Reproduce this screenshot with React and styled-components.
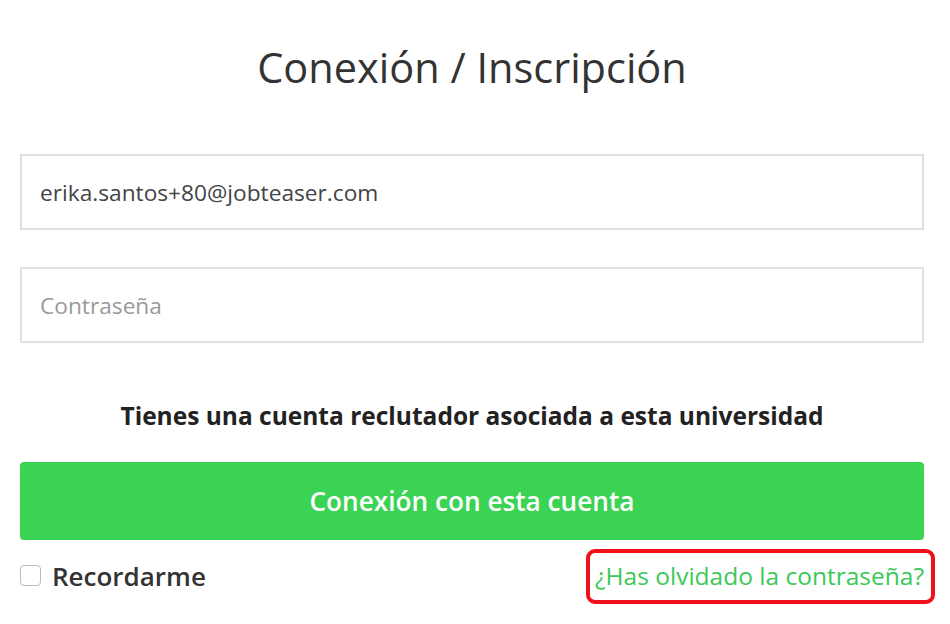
import React from 'react';
import styled, { createGlobalStyle } from 'styled-components';

const GlobalStyle = createGlobalStyle`
    body {
        margin: 0;
        background: #fff;
        font-family: "Open Sans", "Noto Sans", sans-serif;
    }
`

const Page = styled.div`
    width: 950px;
    height: 624px;
    box-sizing: border-box;
    padding: 0 26px 0 20px;
    display: flex;
    flex-direction: column;
`

const Title = styled.h1`
    margin: 39px 0 0;
    font-size: 41.5px;
    font-weight: 400;
    line-height: 56px;
    color: #333;
    text-align: center;
`

const Input = styled.input`
    box-sizing: border-box;
    width: 100%;
    height: 76px;
    margin-top: ${p => p.$top}px;
    padding: 0 18px;
    border: 2px solid #e0e0e0;
    border-radius: 0;
    font-family: inherit;
    font-size: 22.7px;
    color: #444;
    outline: none;

    &::placeholder {
        color: #999;
    }
`

const Notice = styled.p`
    margin: 56px 0 0;
    font-size: 24.5px;
    font-weight: 700;
    line-height: 34px;
    color: #222;
    text-align: center;
`

const Button = styled.button`
    margin-top: 29px;
    height: 78px;
    border: none;
    border-radius: 4px;
    background: #3ad354;
    color: #fff;
    font-family: inherit;
    font-size: 26.2px;
    font-weight: 600;
`

const Footer = styled.div`
    margin-top: 13px;
    display: flex;
    align-items: center;
    justify-content: space-between;
`

const Remember = styled.label`
    display: flex;
    align-items: center;
    gap: 11px;
    font-size: 26px;
    font-weight: 600;
    color: #333;
`

const Check = styled.span`
    width: 19px;
    height: 19px;
    border: 1.5px solid #bbb;
    border-radius: 4px;
    background: #fff;
`

const LinkWrap = styled.div`
    position: relative;
    padding: 6px 0;
`

const Forgot = styled.a`
    font-size: 24.5px;
    color: #3ac956;
    text-decoration: none;
`

const Highlight = styled.span`
    position: absolute;
    left: -9px;
    right: -11px;
    top: -4px;
    bottom: -6px;
    border: 4px solid #f0101a;
    border-radius: 9px;
`

export default function App() {
    return (
        <>
            <GlobalStyle />
            <Page>
                <Title>Conexión / Inscripción</Title>
                <Input $top={59} defaultValue="erika.santos+80@jobteaser.com" />
                <Input $top={37} type="password" placeholder="Contraseña" />
                <Notice>Tienes una cuenta reclutador asociada a esta universidad</Notice>
                <Button>Conexión con esta cuenta</Button>
                <Footer>
                    <Remember><Check />Recordarme</Remember>
                    <LinkWrap>
                        <Forgot href="#">¿Has olvidado la contraseña?</Forgot>
                        <Highlight />
                    </LinkWrap>
                </Footer>
            </Page>
        </>
    )
}
